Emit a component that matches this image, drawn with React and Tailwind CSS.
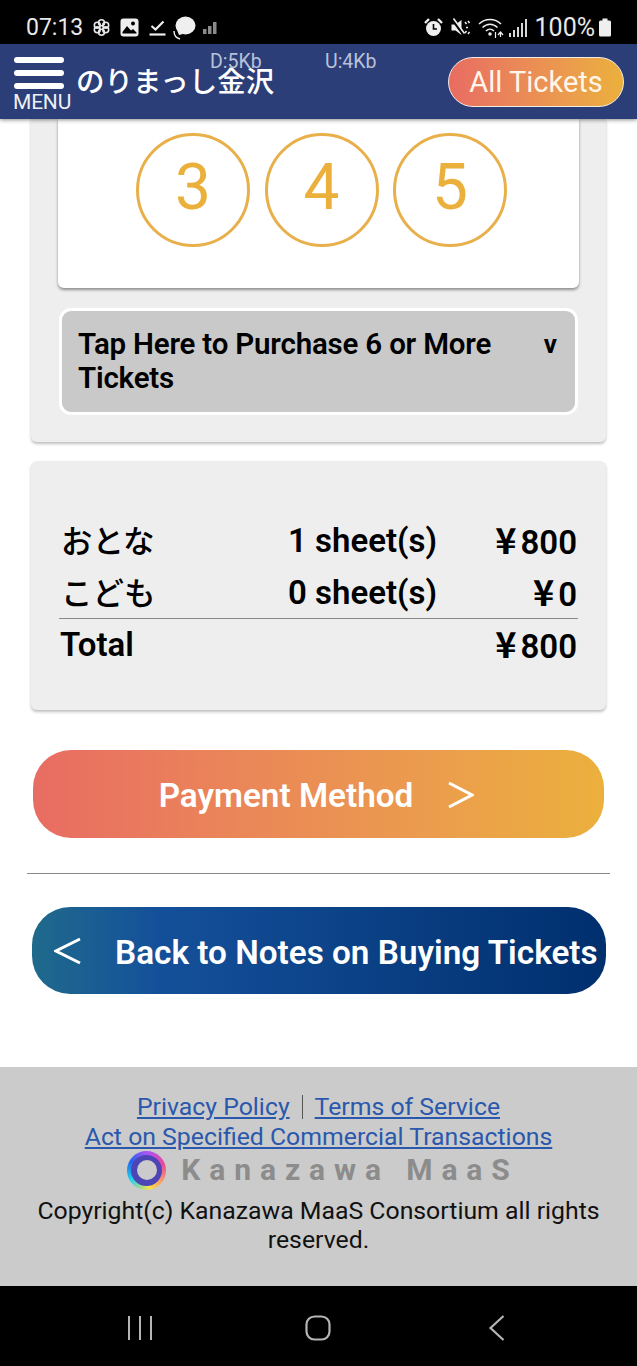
import React from 'react';

const StatusBar = () => (
  <div className="h-[44px] bg-black flex items-center pl-[26px] pr-[25px] pt-[11px] text-[#e8e8e8] shrink-0">
    <span className="text-[23px] leading-none">07:13</span>
    <svg className="ml-[9px] w-[19px] h-[19px]" viewBox="0 0 18 18" fill="none" stroke="#e8e8e8" strokeWidth="1.5">
      <circle cx="9" cy="4.5" r="2.8" />
      <circle cx="9" cy="13.5" r="2.8" />
      <circle cx="5" cy="6.8" r="2.8" />
      <circle cx="13" cy="6.8" r="2.8" />
      <circle cx="5" cy="11.2" r="2.8" />
      <circle cx="13" cy="11.2" r="2.8" />
    </svg>
    <svg className="ml-[9px] w-[19px] h-[19px]" viewBox="0 0 19 19">
      <rect x="0.5" y="0.5" width="18" height="18" rx="3" fill="#efefef" />
      <circle cx="13" cy="5.5" r="2" fill="#000" />
      <path d="M2.5 14 L7 8 L11 12.5 L13 11 L16.5 14.5 V15.5 H2.5 Z" fill="#000" />
    </svg>
    <svg className="ml-[10px] w-[17px] h-[17px]" viewBox="0 0 17 17" fill="none" stroke="#efefef" strokeWidth="2.2">
      <path d="M2.5 7 L6.5 10.5 L14.5 2.5" />
      <path d="M0.5 15.5 H16.5" />
    </svg>
    <svg className="ml-[6px] w-[24px] h-[24px]" viewBox="0 0 24 24">
      <ellipse cx="13.5" cy="9.5" rx="10" ry="9" fill="#efefef" />
      <path d="M5 14 L7 19 L11 18 Z" fill="#efefef" />
      <path d="M2 15 C2 20 4 22 8 23" fill="none" stroke="#efefef" strokeWidth="1.4" />
    </svg>
    <svg className="ml-[7px] w-[14px] h-[14px]" viewBox="0 0 14 14" fill="#8a8a8a">
      <rect x="0" y="8" width="3.5" height="5" />
      <rect x="5" y="5" width="3.5" height="8" />
      <rect x="10" y="1" width="3.5" height="12" />
    </svg>
    <div className="ml-auto flex items-center">
      <svg className="w-[19px] h-[19px]" viewBox="0 0 19 19">
        <circle cx="9.5" cy="10.5" r="7.5" fill="#efefef" />
        <path d="M9.5 6 V11 H13" fill="none" stroke="#000" strokeWidth="1.6" />
        <path d="M1 5 L5 1 M18 5 L14 1" stroke="#efefef" strokeWidth="2.4" />
      </svg>
      <svg className="ml-[8px] w-[19px] h-[19px]" viewBox="0 0 19 19">
        <path d="M0.5 6.5 H4.5 L10.5 2 V17 L4.5 12.5 H0.5 Z" fill="#efefef" />
        <path d="M2 2 L13 17" stroke="#000" strokeWidth="3" />
        <path d="M2.5 0.5 L13.5 15.5" stroke="#efefef" strokeWidth="1.6" />
        <path d="M14 4 L15.5 6 M15 9.5 H17 M14 15 L15.5 13 M17 3 L18.5 5 M17 16 L18.5 14" stroke="#efefef" strokeWidth="1.5" />
      </svg>
      <svg className="ml-[8px] w-[26px] h-[22px]" viewBox="0 0 26 22" fill="none" stroke="#efefef" strokeWidth="1.5">
        <path d="M1 7 C7 1 17 1 23 7" />
        <path d="M4.5 10.5 C9 6 15 6 19.5 10.5" />
        <path d="M8 14 C10.5 11.5 13.5 11.5 16 14" />
        <circle cx="12" cy="17" r="1" fill="#efefef" />
        <path d="M17.5 15 V21 M20 18 L22.5 15 L25 18 M22.5 15 V20" strokeWidth="1.2" />
      </svg>
      <svg className="ml-[5px] w-[18px] h-[20px]" viewBox="0 0 18 20" fill="#d8d8d8">
        <rect x="0" y="15" width="2" height="4" />
        <rect x="4" y="12" width="2" height="7" />
        <rect x="8" y="9" width="2" height="10" />
        <rect x="12" y="5" width="2" height="14" />
        <rect x="16" y="1" width="2" height="18" />
      </svg>
      <span className="ml-[8px] text-[25px] leading-none">100%</span>
      <svg className="ml-[3px] w-[14px] h-[19px]" viewBox="0 0 14 19" fill="#efefef">
        <rect x="1" y="2.5" width="12" height="16" rx="1.5" />
        <rect x="4.5" y="0.5" width="5" height="3" />
      </svg>
    </div>
  </div>
);

const Header = () => (
  <header className="relative h-[75px] bg-[#2c3e78] shrink-0 z-10 flex items-center shadow-[0_1px_4px_rgba(0,0,0,0.45)] pl-[14px] pr-[13px]">
    <div className="w-[57px] h-full flex flex-col pt-[13px] text-white">
      <div className="w-[50px] flex flex-col gap-[7px]">
        <div className="h-[6px] rounded-full bg-white" />
        <div className="h-[6px] rounded-full bg-white" />
        <div className="h-[6px] rounded-full bg-white" />
      </div>
      <span className="text-[21px] leading-[22px] mt-[2px] -ml-[1px] -tracking-[0.2px] text-[#eef0f6]">MENU</span>
    </div>
    <span className="ml-[5px] -mt-[3px] text-[28.5px] leading-none font-medium text-white font-['Noto_Sans_CJK_JP',sans-serif]">のりまっし金沢</span>
    <span className="absolute left-[210px] top-[8px] text-[19.5px] leading-[20px] text-[#b9c1d8]">D:5Kb</span>
    <span className="absolute left-[325px] top-[8px] text-[19.5px] leading-[20px] text-[#b9c1d8]">U:4Kb</span>
    <button className="ml-auto w-[176px] h-[50px] pt-[2px] rounded-full border-[1.5px] border-[#f3ece4] bg-gradient-to-r from-[#e86c62] to-[#ebb03c] text-[29px] leading-none text-[#fff6ea]">All Tickets</button>
  </header>
);

const CountCircle = ({ n }) => (
  <div className="w-[114px] h-[114px] pb-[4px] rounded-full border-[3px] border-[#e8b04a] flex items-center justify-center text-[64px] leading-none text-[#ebb03c]">{n}</div>
);

const Yen = ({ value }) => (
  <span className="flex-1 -mt-[6px] flex justify-end items-baseline text-[33px] leading-none font-semibold">
    <span className="mr-[4px] font-['Noto_Sans_CJK_JP',sans-serif] text-[36px] leading-none">¥</span>
    {value}
  </span>
);

const SummaryRow = ({ label, sheets, price }) => (
  <div className="flex items-center h-[52px] pl-[2px] pr-[1px] font-medium">
    <span className="w-[197px] -mt-[4px] text-[31.5px] leading-none font-['Noto_Sans_CJK_JP',sans-serif]">{label}</span>
    <span className="w-[179px] text-right text-[33px] leading-none font-semibold -mt-[3px]">{sheets}</span>
    <Yen value={price} />
  </div>
);

const Main = () => (
  <main className="flex-1 flex flex-col bg-white overflow-hidden">
    <section className="mx-[31px] w-[575px] h-[323px] bg-[#eeeeee] rounded-b-[6px] shadow-[0_2px_3px_rgba(0,0,0,0.25)] px-[27px] shrink-0">
      <div className="h-[169px] bg-white rounded-b-[6px] shadow-[0_2px_3px_rgba(0,0,0,0.4)] pt-[14px] pl-[78px] flex gap-[14.5px]">
        <CountCircle n={3} />
        <CountCircle n={4} />
        <CountCircle n={5} />
      </div>
      <button className="mt-[20px] ml-[1px] w-[519px] h-[107px] bg-[#c9c9c9] border-[3px] border-white rounded-[12px] pl-[16px] pr-[18px] pt-[16px] flex items-start justify-between text-left text-black">
        <span className="w-[430px] text-[29.5px] leading-[34px] font-semibold -tracking-[0.2px]">Tap Here to Purchase 6 or More Tickets</span>
        <span className="text-[26px] leading-[34px] font-bold">v</span>
      </button>
    </section>

    <section className="mt-[19px] mx-[31px] w-[575px] h-[249px] bg-[#eeeeee] rounded-[6px] shadow-[0_2px_3px_rgba(0,0,0,0.25)] px-[28px] pt-[55px] shrink-0 text-black">
      <SummaryRow label="おとな" sheets="1 sheet(s)" price="800" />
      <SummaryRow label="こども" sheets="0 sheet(s)" price="0" />
      <div className="h-px bg-[#8a8a8a] -mt-[2px] mb-[1px]" />
      <div className="flex items-center h-[52px] pl-[1px] pr-[1px]">
        <span className="text-[33px] leading-none font-semibold -mt-[3px]">Total</span>
        <Yen value="800" />
      </div>
    </section>

    <button className="mt-[40px] ml-[33px] w-[571px] h-[88px] shrink-0 rounded-[38px] bg-gradient-to-r from-[#e86c62] to-[#ebb03c] flex items-center justify-center text-white pr-[4px] pt-[4px]">
      <span className="text-[33.3px] leading-none font-semibold">Payment Method</span>
      <svg className="ml-[35px] -mt-[3px] w-[26px] h-[28px]" viewBox="0 0 26 28" fill="none" stroke="#fff" strokeWidth="3">
        <path d="M1 2 L24 14 L1 26" />
      </svg>
    </button>

    <div className="mt-[35px] ml-[27px] w-[583px] h-px bg-[#8a8a8a] shrink-0" />

    <button className="mt-[33px] ml-[32px] w-[574px] h-[87px] shrink-0 rounded-[38px] bg-[linear-gradient(to_right,#1f6a8c_0%,#14509a_22%,#002f6e_100%)] flex items-center text-white pl-[22px] pt-[4px]">
      <svg className="-mt-[4px] w-[28px] h-[28px]" viewBox="0 0 28 28" fill="none" stroke="#fff" strokeWidth="3">
        <path d="M26 2 L2 14 L26 26" />
      </svg>
      <span className="ml-[33px] text-[33.3px] leading-none font-semibold whitespace-nowrap">Back to Notes on Buying Tickets</span>
    </button>

    <footer className="mt-auto h-[219px] shrink-0 bg-[#cbcbcb] flex flex-col items-center pt-[25px] text-[24.8px]">
      <div className="flex items-center leading-[30px] text-[#2a58ad]">
        <a className="underline">Privacy Policy</a>
        <span className="mx-[12px] w-px h-[24px] bg-[#555]" />
        <a className="underline">Terms of Service</a>
      </div>
      <a className="underline leading-[30px] text-[#2a58ad]">Act on Specified Commercial Transactions</a>
      <div className="flex items-center h-[36px]">
        <div className="w-[39px] h-[39px] rounded-full bg-[conic-gradient(#a855f7_0deg,#ec4899_70deg,#fde047_170deg,#22d3ee_240deg,#2563eb_300deg,#a855f7_360deg)] flex items-center justify-center">
          <div className="w-[31px] h-[31px] rounded-full bg-[#4b45b5] flex items-center justify-center">
            <div className="w-[20px] h-[20px] rounded-full bg-[#cbcbcb]" />
          </div>
        </div>
        <span className="ml-[15px] -mr-[9px] text-[30px] leading-none font-bold tracking-[8.9px] text-[#8c8c8c]">Kanazawa MaaS</span>
      </div>
      <p className="w-[600px] mt-[8px] text-center leading-[29px] text-[#111]">Copyright(c) Kanazawa MaaS Consortium all rights reserved.</p>
    </footer>
  </main>
);

const NavBar = () => (
  <div className="h-[80px] bg-black shrink-0 flex items-start pt-[29px] pl-[127px]">
    <svg className="w-[26px] h-[26px]" viewBox="0 0 26 26" stroke="#b5b5b5" strokeWidth="2">
      <path d="M2 1 V25 M13 1 V25 M24 1 V25" />
    </svg>
    <svg className="ml-[152px] w-[26px] h-[26px]" viewBox="0 0 26 26" fill="none" stroke="#b5b5b5" strokeWidth="2.2">
      <rect x="1.5" y="1.5" width="23" height="23" rx="8" />
    </svg>
    <svg className="ml-[157px] w-[18px] h-[26px]" viewBox="0 0 18 26" fill="none" stroke="#b5b5b5" strokeWidth="2.2">
      <path d="M15.5 1 L2.5 13 L15.5 25" />
    </svg>
  </div>
);

export default function App() {
  return (
    <div className="w-[637px] h-[1366px] flex flex-col overflow-hidden font-['Roboto',sans-serif]">
      <StatusBar />
      <Header />
      <Main />
      <NavBar />
    </div>
  );
}
